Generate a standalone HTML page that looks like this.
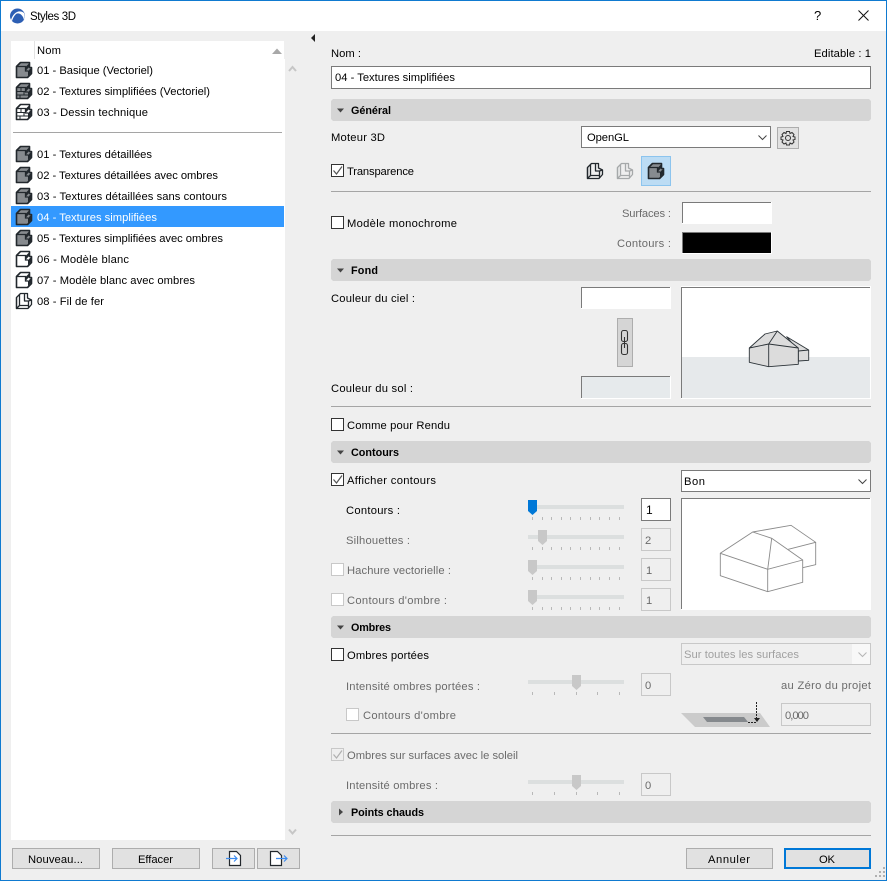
<!DOCTYPE html>
<html><head><meta charset="utf-8"><title>Styles 3D</title>
<style>
html,body{margin:0;padding:0;background:#efefef}
svg{display:block}
text{font-family:"Liberation Sans",sans-serif;font-size:11.2px;fill:#000;white-space:pre}
.d{fill:#6b6b6b}
.b{font-weight:bold;font-size:10.8px}
</style></head><body>
<svg width="887" height="881" viewBox="0 0 887 881" xmlns="http://www.w3.org/2000/svg" shape-rendering="crispEdges">
<defs>
<g id="solid" shape-rendering="auto"><path d="M1.500 5.500L5.500 1.500H14.500V6.500H16.500V12.500L12.500 16.500H1.500Z" fill="#878b8f" stroke="#22282d" stroke-width="1.600" stroke-linejoin="round"/><path d="M2 5.500H10.500V10H13" fill="none" stroke="#22282d" stroke-width="1.300"/><path d="M10.500 6L14 2.500V6L11 9.500Z" fill="#22282d"/><path d="M13 10L16 7V12L13 15Z" fill="#22282d"/></g>
<g id="white" shape-rendering="auto"><path d="M1.500 5.500L5.500 1.500H14.500V6.500H16.500V12.500L12.500 16.500H1.500Z" fill="#fff" stroke="#22282d" stroke-width="1.600" stroke-linejoin="round"/><path d="M2 5.500H10.500V10H13" fill="none" stroke="#22282d" stroke-width="1.300"/><path d="M10.500 6L14 2.500V6L11 9.500Z" fill="#22282d"/><path d="M13 10L16 7V12L13 15Z" fill="#22282d"/></g>
<g id="brick1"><use href="#solid"/><path d="M2 9.500H10M2 13H15M6 6V9.500M9 9.500V13M5 13V16" fill="none" stroke="#22282d" stroke-width="1"/></g>
<g id="brick2"><use href="#white"/><path d="M2 9.500H10M2 13H15M6 6V9.500M9 9.500V13M5 13V16" fill="none" stroke="#22282d" stroke-width="1"/></g>
<g id="wire" fill="none" stroke="#22282d" stroke-width="1.300" shape-rendering="auto" stroke-linejoin="round"><path d="M1.500 5.500L5.500 1.500H12.500V6L16.500 8V12.500L13 16.500H1.500Z"/><path d="M1.500 5.500V16.500L4.500 13.500V3M4.500 13.500H13.500V9H9.500V2M13.500 13.500V16M13.500 9L16.500 8"/></g>
<g id="tick"><rect width="1" height="3" fill="#b8b8b8"/></g>
<g id="ticks10"><use href="#tick" x="0"/><use href="#tick" x="10"/><use href="#tick" x="19"/><use href="#tick" x="29"/><use href="#tick" x="38"/><use href="#tick" x="48"/><use href="#tick" x="58"/><use href="#tick" x="67"/><use href="#tick" x="77"/><use href="#tick" x="87"/></g>
<g id="ticks5"><use href="#tick" x="0"/><use href="#tick" x="22"/><use href="#tick" x="44"/><use href="#tick" x="65"/><use href="#tick" x="87"/></g>
<path id="thumb" d="M0 0H9V11L4.500 15L0 11Z"/>
</defs>

<!-- window -->
<rect width="887" height="881" fill="#0f7ad0"/>
<rect x="1" y="1" width="885" height="879" fill="#efefef"/>
<rect x="1" y="1" width="885" height="30" fill="#fff"/>
<!-- title icon -->
<circle cx="17.500" cy="16" r="7.500" fill="#2d5fb4" shape-rendering="auto"/>
<path d="M11 20C13 13 19 9 24 13C25 15 25 18 24 20C23 15 19 12 16 14C14 16 13 18 12 21Z" fill="#fff" shape-rendering="auto"/>
<text x="30" y="20" style="font-size:11.500px" textLength="46">Styles 3D</text>
<text x="814" y="20" style="font-size:13px" textLength="7">?</text>
<path d="M858.500 10.500L868.500 20.500M868.500 10.500L858.500 20.500" stroke="#111" stroke-width="1" fill="none" shape-rendering="auto"/>

<!-- list -->
<rect x="11" y="41" width="273" height="18" fill="#fff"/>
<rect x="11" y="59" width="274" height="781" fill="#fff"/>
<rect x="34" y="41" width="1" height="18" fill="#e3e3e3"/>
<text x="37" y="54" textLength="24">Nom</text>
<path d="M272 54L277 48.500L282 54Z" fill="#a8a8a8" shape-rendering="auto"/>
<path d="M289 71L292.500 67L296 71" fill="none" stroke="#c6c6c6" stroke-width="2" shape-rendering="auto"/>
<path d="M289 829.500L292.500 833.500L296 829.500" fill="none" stroke="#c6c6c6" stroke-width="2" shape-rendering="auto"/>
<rect x="13" y="132" width="269" height="1" fill="#a5a5a5"/>
<rect x="11" y="206" width="273" height="21" fill="#3399ff"/>

<use href="#solid" x="15" y="61"/><text x="37" y="74" textLength="116">01 - Basique (Vectoriel)</text>
<use href="#brick1" x="15" y="82"/><text x="37" y="95" textLength="173">02 - Textures simplifiées (Vectoriel)</text>
<use href="#brick2" x="15" y="103"/><text x="37" y="116" textLength="111">03 - Dessin technique</text>
<use href="#solid" x="15" y="145"/><text x="37" y="158" textLength="115">01 - Textures détaillées</text>
<use href="#solid" x="15" y="166"/><text x="37" y="179" textLength="181">02 - Textures détaillées avec ombres</text>
<use href="#solid" x="15" y="187"/><text x="37" y="200" textLength="190">03 - Textures détaillées sans contours</text>
<use href="#solid" x="15" y="208"/><text x="37" y="221" textLength="120" style="fill:#fff">04 - Textures simplifiées</text>
<use href="#solid" x="15" y="229"/><text x="37" y="242" textLength="186">05 - Textures simplifiées avec ombres</text>
<use href="#white" x="15" y="250"/><text x="37" y="263" textLength="92">06 - Modèle blanc</text>
<use href="#white" x="15" y="271"/><text x="37" y="284" textLength="158">07 - Modèle blanc avec ombres</text>
<use href="#wire" x="15" y="292"/><text x="37" y="305" textLength="67">08 - Fil de fer</text>

<!-- left buttons -->
<g fill="#e1e1e1" stroke="#adadad" stroke-width="1">
<rect x="12.500" y="848.500" width="87" height="20"/>
<rect x="112.500" y="848.500" width="87" height="20"/>
<rect x="212.500" y="848.500" width="42" height="20"/>
<rect x="257.500" y="848.500" width="42" height="20"/>
</g>
<text x="28" y="863" textLength="55">Nouveau...</text>
<text x="138" y="863" textLength="35">Effacer</text>
<path d="M229.500 851.500H236.500L240.500 855.500V865.500H229.500Z" fill="#fff" stroke="#22282d" stroke-width="1.200" shape-rendering="auto"/>
<path d="M226 858.500H237M234 855.500L237 858.500L234 861.500" fill="none" stroke="#3c8cf0" stroke-width="1.200" shape-rendering="auto"/>
<path d="M270.500 851.500H277.500L281.500 855.500V865.500H270.500Z" fill="#fff" stroke="#22282d" stroke-width="1.200" shape-rendering="auto"/>
<path d="M276 858.500H287M284 855.500L287 858.500L284 861.500" fill="none" stroke="#3c8cf0" stroke-width="1.200" shape-rendering="auto"/>

<!-- splitter -->
<path d="M315 34V42L311 38Z" fill="#222" shape-rendering="auto"/>

<!-- header -->
<text x="331" y="57" textLength="30">Nom :</text>
<text x="814" y="57" textLength="57">Editable : 1</text>
<rect x="331.500" y="66.500" width="539" height="22" fill="#fff" stroke="#7a7a7a"/>
<text x="335" y="81" textLength="120">04 - Textures simplifiées</text>

<!-- section bars -->
<g fill="#d5d5d5">
<rect x="331" y="99" width="540" height="22" rx="3"/>
<rect x="331" y="259" width="540" height="22" rx="3"/>
<rect x="331" y="441" width="540" height="22" rx="3"/>
<rect x="331" y="616" width="540" height="22" rx="3"/>
<rect x="331" y="801" width="540" height="22" rx="3"/>
</g>
<g fill="#444" shape-rendering="auto">
<path d="M337 108.500H344L340.500 112.500Z"/>
<path d="M337 268.500H344L340.500 272.500Z"/>
<path d="M337 450.500H344L340.500 454.500Z"/>
<path d="M337 625.500H344L340.500 629.500Z"/>
<path d="M339 808.500V815.500L343 812Z"/>
</g>
<text class="b" x="351" y="114" textLength="40">Général</text>
<text class="b" x="351" y="274" textLength="27">Fond</text>
<text class="b" x="351" y="456" textLength="48">Contours</text>
<text class="b" x="351" y="631" textLength="40">Ombres</text>
<text class="b" x="351" y="816" textLength="73">Points chauds</text>

<!-- Général -->
<text x="331" y="141" textLength="54">Moteur 3D</text>
<rect x="581.500" y="126.500" width="189" height="21" fill="#fff" stroke="#7a7a7a"/>
<text x="587" y="141" textLength="42">OpenGL</text>
<path d="M758.500 135.500L762.500 139.500L766.500 135.500" fill="none" stroke="#444" shape-rendering="auto"/>
<rect x="777.500" y="127.500" width="21" height="21" fill="#e1e1e1" stroke="#adadad"/>
<g shape-rendering="auto" fill="none" stroke="#333"><circle cx="788" cy="138" r="2.500"/><path d="M786.500 131.500H789.500L790 133.500L792 132.500L794 134.500L793 136.500L795 137V139.500L793 140L794 142L792 144L790 143L789.500 145H786.500L786 143L784 144L782 142L783 140L781 139.500V137L783 136.500L782 134.500L784 132.500L786 133.500Z"/></g>
<rect x="331.500" y="164.500" width="12" height="12" fill="#fff" stroke="#333"/>
<path d="M333.500 170.500L336.500 174L342 166.500" fill="none" stroke="#555" stroke-width="1.200" shape-rendering="auto"/>
<text x="347" y="175" textLength="67">Transparence</text>
<use href="#wire" x="586" y="162"/>
<g opacity=".35"><use href="#wire" x="616" y="162"/></g>
<rect x="641.500" y="156.500" width="29" height="29" fill="#bcdcf4" stroke="#8cc4ee"/>
<use href="#solid" x="647" y="162"/>
<rect x="331" y="191" width="540" height="1" fill="#a5a5a5"/>

<rect x="331.500" y="216.500" width="12" height="12" fill="#fff" stroke="#333"/>
<text x="347" y="227" textLength="110">Modèle monochrome</text>
<text class="d" x="622" y="217" textLength="49">Surfaces :</text>
<text class="d" x="617" y="247" textLength="54">Contours :</text>
<rect x="682" y="202" width="90" height="22" fill="#fff"/>
<path d="M682.500 223V202.500H771" fill="none" stroke="#7a7a7a"/>
<rect x="682" y="232" width="90" height="22" fill="#fff"/>
<rect x="683" y="233" width="88" height="20" fill="#000"/>
<path d="M682.500 253V232.500H771" fill="none" stroke="#7a7a7a"/>

<!-- Fond -->
<text x="331" y="302" textLength="84">Couleur du ciel :</text>
<text x="331" y="392" textLength="82">Couleur du sol :</text>
<rect x="581" y="287" width="90" height="22" fill="#fff"/>
<path d="M581.500 308V287.500H670" fill="none" stroke="#7a7a7a"/>
<rect x="617.500" y="318.500" width="15" height="48" fill="#d5d5d5" stroke="#adadad"/>
<g fill="none" stroke="#333" stroke-width="1.100" shape-rendering="auto"><rect x="621.500" y="330.500" width="6" height="11" rx="2"/><rect x="621.500" y="343.500" width="6" height="11" rx="2"/><path d="M624.500 337V348"/></g>
<rect x="581" y="376" width="90" height="23" fill="#fff"/>
<rect x="582" y="377" width="88" height="21" fill="#e6eaec"/>
<path d="M581.500 398V376.500H670" fill="none" stroke="#7a7a7a"/>
<rect x="681" y="286" width="190" height="113" fill="#fff"/>
<rect x="682" y="357" width="188" height="41" fill="#e6e9eb"/>
<path d="M681.500 398V287.500H870" fill="none" stroke="#7a7a7a"/>
<g shape-rendering="auto" stroke="#2c3338" stroke-width=".9" stroke-linejoin="round">
<path d="M786.700 336.700L808.700 350V360.300L798.300 361V351Z" fill="#dcdcdc"/>
<path d="M798.300 351L808.700 350" fill="none"/>
<path d="M749.300 348L765 334L777.300 331L798.300 348V364.300L768.700 366.700L749.300 362.300Z" fill="#dcdcdc"/>
<path d="M749.300 348L768.700 344L798.300 348M768.700 344V366.700M768.700 344L777.300 331" fill="none"/>
</g>
<rect x="331" y="406" width="540" height="1" fill="#a5a5a5"/>
<rect x="331.500" y="418.500" width="12" height="12" fill="#fff" stroke="#333"/>
<text x="347" y="429" textLength="103">Comme pour Rendu</text>

<!-- Contours -->
<rect x="331.500" y="473.500" width="12" height="12" fill="#fff" stroke="#333"/>
<path d="M333.500 479.500L336.500 483L342 475.500" fill="none" stroke="#555" stroke-width="1.200" shape-rendering="auto"/>
<text x="347" y="484" textLength="89">Afficher contours</text>
<rect x="681.500" y="470.500" width="189" height="21" fill="#fff" stroke="#7a7a7a"/>
<text x="684" y="485" textLength="21">Bon</text>
<path d="M858.500 479.500L862.500 483.500L866.500 479.500" fill="none" stroke="#444" shape-rendering="auto"/>
<rect x="681" y="498" width="190" height="112" fill="#fff"/>
<path d="M681.500 609V498.500H870" fill="none" stroke="#7a7a7a"/>
<g shape-rendering="auto" fill="none" stroke="#8a8a8a" stroke-width=".9"><path d="M720.300 553.300L752.700 532L771.700 538.300L802.700 560V582.300L767.700 591.700L720.300 575.700Z"/><path d="M720.300 553.300L767.700 569.300L802.700 560M767.700 569.300V591.700M767.700 569.300L771.700 538.300M752.700 532L791 525.300L815.700 542.300V564.700L802.700 567.700M788.300 549.300L815.700 542.300"/></g>

<text x="346" y="514" textLength="54">Contours :</text>
<text class="d" x="346" y="544" textLength="64">Silhouettes :</text>
<rect x="331.500" y="563.500" width="12" height="12" fill="#fff" stroke="#c8c8c8"/>
<text class="d" x="347" y="574" textLength="104">Hachure vectorielle :</text>
<rect x="331.500" y="593.500" width="12" height="12" fill="#fff" stroke="#c8c8c8"/>
<text class="d" x="347" y="604" textLength="100">Contours d'ombre :</text>

<g fill="#dcdfdf">
<rect x="528" y="505" width="96" height="4"/>
<rect x="528" y="535" width="96" height="4"/>
<rect x="528" y="565" width="96" height="4"/>
<rect x="528" y="595" width="96" height="4"/>
<rect x="528" y="680" width="96" height="4"/>
<rect x="528" y="780" width="96" height="4"/>
</g>
<use href="#ticks10" x="532" y="517"/>
<use href="#ticks10" x="532" y="547"/>
<use href="#ticks10" x="532" y="577"/>
<use href="#ticks10" x="532" y="607"/>
<use href="#ticks5" x="532" y="692"/>
<use href="#ticks5" x="532" y="792"/>
<use href="#thumb" x="528" y="500" fill="#0078d7" shape-rendering="auto"/>
<g fill="#c8c8c8" shape-rendering="auto">
<use href="#thumb" x="538" y="530"/>
<use href="#thumb" x="528" y="560"/>
<use href="#thumb" x="528" y="590"/>
<use href="#thumb" x="572" y="675"/>
<use href="#thumb" x="572" y="775"/>
</g>

<rect x="641.500" y="498.500" width="29" height="22" fill="#fff" stroke="#7a7a7a"/>
<text x="646" y="514" style="font-size:12px" textLength="5">1</text>
<g fill="#efefef" stroke="#c8c8c8">
<rect x="641.500" y="528.500" width="29" height="22"/>
<rect x="641.500" y="558.500" width="29" height="22"/>
<rect x="641.500" y="588.500" width="29" height="22"/>
<rect x="641.500" y="673.500" width="29" height="22"/>
<rect x="641.500" y="773.500" width="29" height="22"/>
<rect x="781.500" y="703.500" width="89" height="22"/>
</g>
<text class="d" x="645" y="544" textLength="7">2</text>
<text class="d" x="646" y="574" textLength="5">1</text>
<text class="d" x="646" y="604" textLength="5">1</text>
<text class="d" x="645" y="689" textLength="7">0</text>
<text class="d" x="645" y="789" textLength="7">0</text>
<text class="d" x="785" y="719" textLength="24">0,000</text>

<!-- Ombres -->
<rect x="331.500" y="648.500" width="12" height="12" fill="#fff" stroke="#333"/>
<text x="347" y="659" textLength="82">Ombres portées</text>
<rect x="681.500" y="643.500" width="189" height="21" fill="#efefef" stroke="#c8c8c8"/>
<rect x="852" y="644" width="18" height="20" fill="#f8f8f8"/>
<text x="684" y="658" style="fill:#a0a0a0" textLength="115">Sur toutes les surfaces</text>
<path d="M858.500 652.500L862.500 656.500L866.500 652.500" fill="none" stroke="#b5b5b5" shape-rendering="auto"/>
<text class="d" x="346" y="690" textLength="134">Intensité ombres portées :</text>
<text class="d" x="781" y="689" textLength="90">au Zéro du projet</text>
<rect x="346.500" y="708.500" width="12" height="12" fill="#fff" stroke="#c8c8c8"/>
<text class="d" x="363" y="719" textLength="93">Contours d'ombre</text>
<path d="M681 713H760L770 727H695Z" fill="#cbcbcb" shape-rendering="auto"/>
<path d="M703 717H744L748 722H707Z" fill="#85898d" shape-rendering="auto"/>
<path d="M756.500 702V721M748 722.500H757" stroke="#222" fill="none" stroke-dasharray="2 1"/>
<path d="M754 718H760L757 722Z" fill="#222" shape-rendering="auto"/>
<rect x="331" y="733" width="540" height="1" fill="#a5a5a5"/>
<rect x="331.500" y="748.500" width="12" height="12" fill="#efefef" stroke="#c8c8c8"/>
<path d="M333.500 754.500L336.500 758L342 750.500" fill="none" stroke="#b0b0b0" stroke-width="1.200" shape-rendering="auto"/>
<text class="d" x="347" y="759" textLength="171">Ombres sur surfaces avec le soleil</text>
<text class="d" x="346" y="789" textLength="92">Intensité ombres :</text>

<rect x="331" y="835" width="540" height="1" fill="#a5a5a5"/>
<!-- bottom buttons -->
<rect x="686.500" y="848.500" width="86" height="20" fill="#e1e1e1" stroke="#adadad"/>
<text x="708" y="863" textLength="42">Annuler</text>
<rect x="785" y="849" width="85" height="19" fill="#e1e1e1" stroke="#0078d7" stroke-width="2"/>
<text x="819" y="863" textLength="16">OK</text>
<g fill="#b0b0b0"><rect x="883" y="875" width="2" height="2"/><rect x="879" y="875" width="2" height="2"/><rect x="875" y="875" width="2" height="2"/><rect x="883" y="871" width="2" height="2"/><rect x="879" y="871" width="2" height="2"/><rect x="883" y="867" width="2" height="2"/></g>
</svg>
</body></html>
